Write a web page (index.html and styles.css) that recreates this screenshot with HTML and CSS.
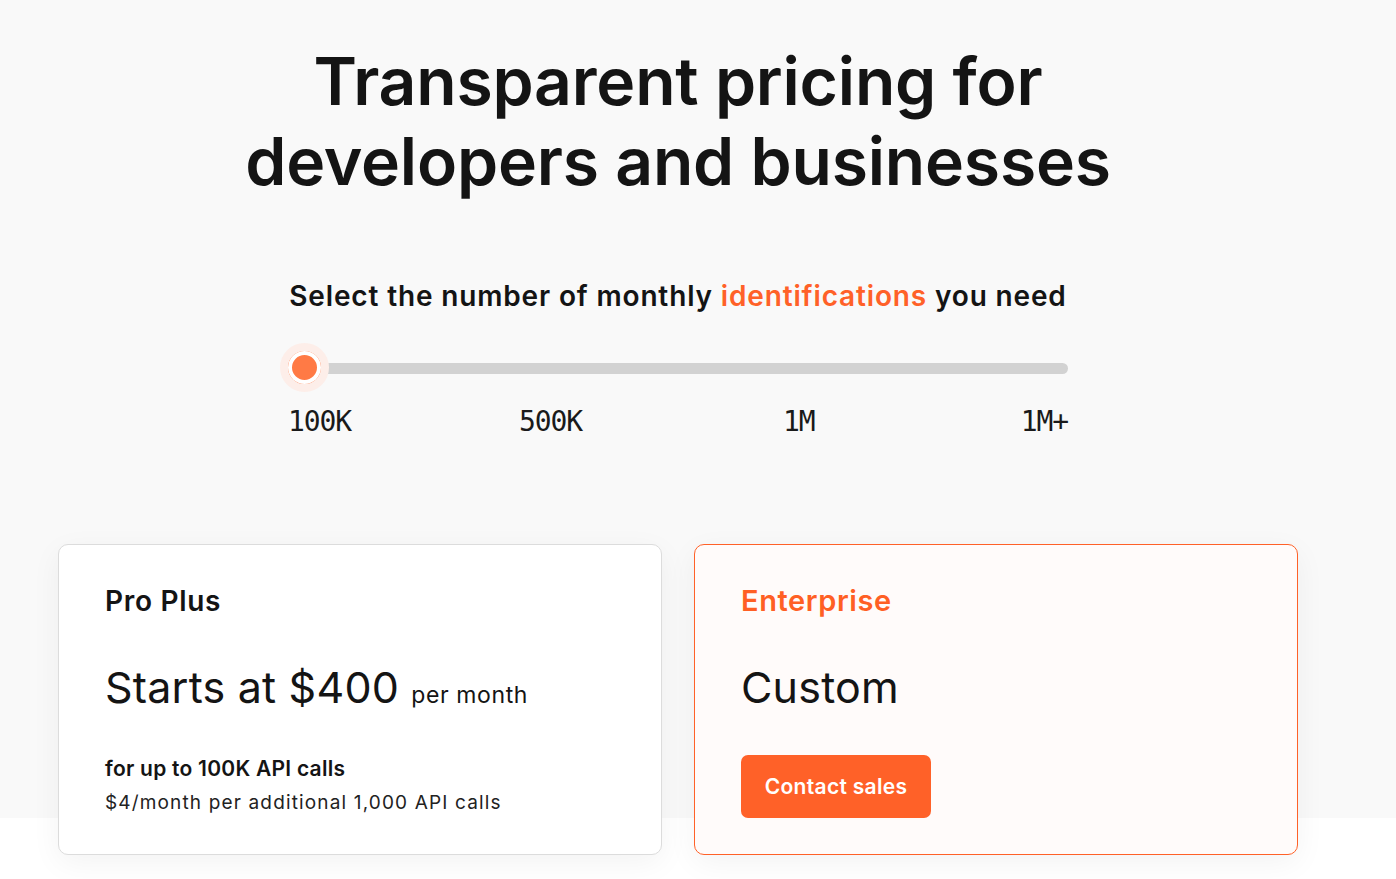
FILE: index.html
```html
<!DOCTYPE html>
<html lang="en">
<head>
<meta charset="utf-8">
<title>Pricing</title>
<link rel="stylesheet" href="styles.css">
</head>
<body>
<main class="page">
  <section class="hero">
    <h1 class="title">Transparent pricing for<br>developers and businesses</h1>
    <div class="picker">
      <p class="picker-title">Select the number of monthly <span class="accent">identifications</span> you need</p>
      <div class="slider">
        <div class="track"></div>
        <div class="thumb"></div>
      </div>
      <div class="ticks">
        <span class="tick">100K</span>
        <span class="tick">500K</span>
        <span class="tick">1M</span>
        <span class="tick">1M+</span>
      </div>
    </div>
  </section>
  <section class="plans">
    <article class="card">
      <h2 class="plan-name">Pro Plus</h2>
      <p class="price">Starts at $400 <span class="per">per month</span></p>
      <p class="limit">for up to 100K API calls</p>
      <p class="extra">$4/month per additional 1,000 API calls</p>
    </article>
    <article class="card card-enterprise">
      <h2 class="plan-name plan-accent">Enterprise</h2>
      <p class="price">Custom</p>
      <a class="btn" href="#">Contact sales</a>
    </article>
  </section>
</main>
</body>
</html>
```

FILE: styles.css
```css
* { box-sizing: border-box; }
html, body { margin: 0; padding: 0; }
body {
  font-family: Inter, "Noto Sans", sans-serif;
  color: #141414;
  background: linear-gradient(#f9f9f9 0, #f9f9f9 818px, #ffffff 818px);
  min-height: 879px;
}
.page {
  width: 1356px;
  padding-top: 41px;
}
.hero {
  display: flex;
  flex-direction: column;
  align-items: center;
}
.title {
  margin: 0;
  font-size: 66px;
  line-height: 80px;
  font-weight: 600;
  text-align: center;
  letter-spacing: -0.2px;
}
.picker {
  width: 780px;
  margin-top: 77px;
}
.picker-title {
  margin: 0;
  font-size: 28px;
  line-height: 36px;
  font-weight: 600;
  letter-spacing: 0.85px;
  text-align: center;
  white-space: nowrap;
}
.accent { color: #ff6128; }
.slider {
  position: relative;
  height: 50px;
  margin-top: 29px;
  display: flex;
  align-items: center;
}
.track {
  flex: 1;
  margin-left: 16px;
  height: 11px;
  border-radius: 6px;
  background: #d2d2d2;
}
.thumb {
  position: absolute;
  left: -8px;
  top: 0;
  width: 49px;
  height: 49px;
  border-radius: 50%;
  background: #ff7a45;
  border: 8px solid #fdeee9;
  box-shadow: inset 0 0 0 4px #ffffff;
}
.ticks {
  display: grid;
  grid-template-columns: 231px 264px 237px 1fr;
  margin-top: 13px;
  font-family: "DejaVu Sans Mono", "Liberation Mono", monospace;
  font-size: 28px;
  letter-spacing: -1.1px;
  line-height: 32px;
  color: #1a1a1a;
}
.tick:last-child { text-align: right; }
.plans {
  display: flex;
  gap: 32px;
  margin: 106px 0 0 58px;
}
.card {
  width: 604px;
  height: 311px;
  padding: 38px 46px;
  background: #ffffff;
  border: 1px solid #dcdcdc;
  border-radius: 10px;
  box-shadow: 0 8px 30px rgba(0, 0, 0, 0.05);
}
.card-enterprise {
  background: #fffbfa;
  border-color: #ff6128;
}
.plan-name {
  margin: 0;
  font-size: 28px;
  line-height: 36px;
  font-weight: 600;
  letter-spacing: 0.7px;
}
.plan-accent {
  color: #ff5f24;
  font-size: 29px;
  letter-spacing: 0.6px;
}
.price {
  margin: 42px 0 0;
  font-size: 43px;
  line-height: 52px;
  font-weight: 400;
  letter-spacing: 0.2px;
}
.per {
  font-size: 23px;
  font-weight: 400;
  letter-spacing: 0.6px;
}
.limit {
  margin: 34px 0 0;
  font-size: 21px;
  line-height: 28px;
  font-weight: 600;
  letter-spacing: 0.25px;
}
.extra {
  margin: 6px 0 0;
  font-size: 19px;
  line-height: 28px;
  letter-spacing: 1.15px;
  color: #222;
}
.btn {
  display: inline-flex;
  align-items: center;
  justify-content: center;
  margin-top: 42px;
  width: 190px;
  height: 63px;
  border-radius: 7px;
  background: #ff6128;
  color: #ffffff;
  font-size: 21px;
  font-weight: 600;
  letter-spacing: 0.3px;
  text-decoration: none;
}
```
